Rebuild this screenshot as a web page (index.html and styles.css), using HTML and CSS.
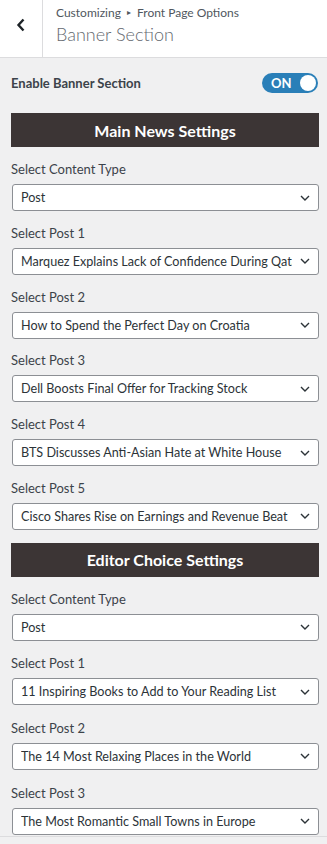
FILE: index.html
```html
<!DOCTYPE html>
<html>
<head>
<meta charset="utf-8">
<link rel="stylesheet" href="styles.css">
</head>
<body>
<header class="top">
  <div class="back">
    <svg width="10" height="14" viewBox="0 0 10 14"><path d="M7.5 1.5 L2.5 7 L7.5 12.5" fill="none" stroke="#1d2327" stroke-width="2.4"/></svg>
  </div>
  <div class="titles">
    <div class="crumb">Customizing <span class="tri">▸</span> Front Page Options</div>
    <div class="title">Banner Section</div>
  </div>
</header>
<main class="panel">
  <div class="enable">
    <span class="enable-label">Enable Banner Section</span>
    <span class="toggle"><span class="on">ON</span><span class="knob"></span></span>
  </div>

  <section class="group">
    <h2 class="group-head">Main News Settings</h2>
    <div class="field"><label>Select Content Type</label><div class="select"><span class="val">Post</span><svg class="chev" width="10" height="6" viewBox="0 0 10 6"><path d="M1 1 L5 5 L9 1" fill="none" stroke="#2c3338" stroke-width="1.4"/></svg></div></div>
    <div class="field"><label>Select Post 1</label><div class="select"><span class="val">Marquez Explains Lack of Confidence During Qatar Race</span><svg class="chev" width="10" height="6" viewBox="0 0 10 6"><path d="M1 1 L5 5 L9 1" fill="none" stroke="#2c3338" stroke-width="1.4"/></svg></div></div>
    <div class="field"><label>Select Post 2</label><div class="select"><span class="val">How to Spend the Perfect Day on Croatia</span><svg class="chev" width="10" height="6" viewBox="0 0 10 6"><path d="M1 1 L5 5 L9 1" fill="none" stroke="#2c3338" stroke-width="1.4"/></svg></div></div>
    <div class="field"><label>Select Post 3</label><div class="select"><span class="val">Dell Boosts Final Offer for Tracking Stock</span><svg class="chev" width="10" height="6" viewBox="0 0 10 6"><path d="M1 1 L5 5 L9 1" fill="none" stroke="#2c3338" stroke-width="1.4"/></svg></div></div>
    <div class="field"><label>Select Post 4</label><div class="select"><span class="val">BTS Discusses Anti-Asian Hate at White House</span><svg class="chev" width="10" height="6" viewBox="0 0 10 6"><path d="M1 1 L5 5 L9 1" fill="none" stroke="#2c3338" stroke-width="1.4"/></svg></div></div>
    <div class="field"><label>Select Post 5</label><div class="select"><span class="val">Cisco Shares Rise on Earnings and Revenue Beat</span><svg class="chev" width="10" height="6" viewBox="0 0 10 6"><path d="M1 1 L5 5 L9 1" fill="none" stroke="#2c3338" stroke-width="1.4"/></svg></div></div>
  </section>

  <section class="group">
    <h2 class="group-head">Editor Choice Settings</h2>
    <div class="field"><label>Select Content Type</label><div class="select"><span class="val">Post</span><svg class="chev" width="10" height="6" viewBox="0 0 10 6"><path d="M1 1 L5 5 L9 1" fill="none" stroke="#2c3338" stroke-width="1.4"/></svg></div></div>
    <div class="field"><label>Select Post 1</label><div class="select"><span class="val">11 Inspiring Books to Add to Your Reading List</span><svg class="chev" width="10" height="6" viewBox="0 0 10 6"><path d="M1 1 L5 5 L9 1" fill="none" stroke="#2c3338" stroke-width="1.4"/></svg></div></div>
    <div class="field"><label>Select Post 2</label><div class="select"><span class="val">The 14 Most Relaxing Places in the World</span><svg class="chev" width="10" height="6" viewBox="0 0 10 6"><path d="M1 1 L5 5 L9 1" fill="none" stroke="#2c3338" stroke-width="1.4"/></svg></div></div>
    <div class="field"><label>Select Post 3</label><div class="select"><span class="val">The Most Romantic Small Towns in Europe</span><svg class="chev" width="10" height="6" viewBox="0 0 10 6"><path d="M1 1 L5 5 L9 1" fill="none" stroke="#2c3338" stroke-width="1.4"/></svg></div></div>
  </section>
</main>
<div class="foot"></div>
</body>
</html>
```
FILE: styles.css
```css
* { box-sizing: border-box; }
html, body { margin: 0; padding: 0; }
body {
  background: #f0f0f1;
  font-family: Lato, "Noto Sans", sans-serif;
  color: #3c434a;
  width: 327px;
  height: 844px;
  overflow: hidden;
}
.top {
  display: flex;
  height: 58px;
  background: #fff;
  border-bottom: 1px solid #dcdcde;
}
.back {
  width: 43px;
  border-right: 1px solid #dcdcde;
  display: flex;
  align-items: center;
  justify-content: center;
  padding-bottom: 8px;
}
.titles {
  padding: 3px 0 0 13px;
}
.crumb {
  font-size: 12px;
  line-height: 18px;
  color: #50575e;
}
.tri { font-size: 8px; vertical-align: 2px; margin: 0 3px; }
.title {
  font-size: 18px;
  line-height: 24px;
  font-weight: 300;
  color: #646970;
}
.panel {
  padding: 0 8px 0 11px;
}
.enable {
  display: flex;
  align-items: center;
  justify-content: space-between;
  height: 50px;
  margin-bottom: 5px;
}
.enable-label {
  font-size: 13px;
  font-weight: 700;
  color: #3c434a;
}
.toggle {
  width: 56px;
  height: 20px;
  border-radius: 10px;
  background: #2a7fb8;
  display: flex;
  align-items: center;
  justify-content: space-between;
  padding: 0 2px 0 9px;
  margin-right: 1px;
}
.on {
  color: #fff;
  font-weight: 700;
  font-size: 13px;
  line-height: 1;
}
.knob {
  width: 16px;
  height: 16px;
  border-radius: 50%;
  background: #fff;
}
.group { margin-bottom: 4px; }
.group-head {
  margin: 0 0 13px;
  height: 34px;
  background: #3c3535;
  color: #fff;
  font-size: 16px;
  font-weight: 700;
  display: flex;
  align-items: center;
  justify-content: center;
}
.field { margin-bottom: 12.8px; }
.group + .group .field { margin-bottom: 13.6px; }
.field label {
  display: block;
  font-size: 13px;
  line-height: 18px;
  margin-bottom: 6px;
  color: #3c434a;
}
.select {
  margin-left: 1px;
  height: 27px;
  background: #fff;
  border: 1px solid #8c8f94;
  border-radius: 3px;
  display: flex;
  align-items: center;
  padding: 0 8px 0 8px;
  gap: 8px;
}
.val {
  flex: 1;
  min-width: 0;
  overflow: hidden;
  white-space: nowrap;
  font-size: 12.6px;
  color: #2c3338;
}
.chev { flex: none; }
.foot {
  border-top: 1px solid #dcdcde;
  margin-top: -12px;
}
```
